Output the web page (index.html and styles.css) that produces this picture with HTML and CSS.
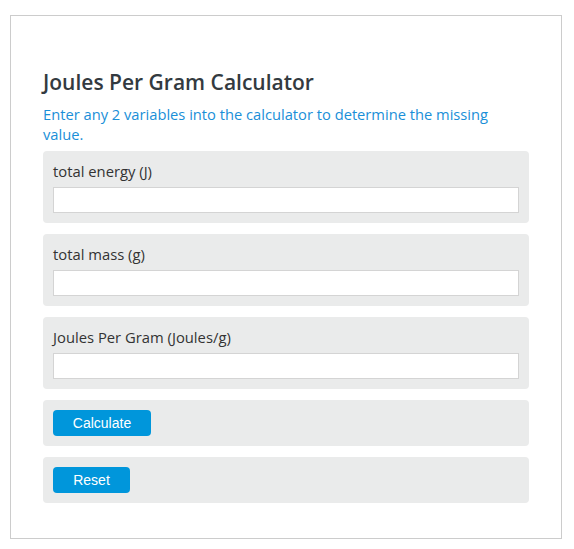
FILE: index.html
```html
<!DOCTYPE html>
<html>
<head>
<meta charset="utf-8">
<link rel="stylesheet" href="styles.css">
</head>
<body>
<div class="calc">
  <h1 class="title">Joules Per Gram Calculator</h1>
  <p class="intro">Enter any 2 variables into the calculator to determine the missing value.</p>
  <div class="fields">
    <div class="panel">
      <label class="label">total energy (J)</label>
      <input class="field" type="text">
    </div>
    <div class="panel">
      <label class="label">total mass (g)</label>
      <input class="field" type="text">
    </div>
    <div class="panel">
      <label class="label">Joules Per Gram (Joules/g)</label>
      <input class="field" type="text">
    </div>
    <div class="panel btn-panel">
      <button class="btn btn-calc">Calculate</button>
    </div>
    <div class="panel btn-panel">
      <button class="btn btn-reset">Reset</button>
    </div>
  </div>
</div>
</body>
</html>
```
FILE: styles.css
```css
html, body {
  margin: 0;
  padding: 0;
  background: #fff;
}
body {
  padding: 15px 0 0 10px;
  font-family: "Open Sans", "Noto Sans", sans-serif;
}
.calc {
  width: 486px;
  height: 522px;
  box-sizing: content-box;
  border: 1px solid #cccccc;
  padding: 0 32px;
}
.title {
  margin: 52px 0 0 0;
  font-size: 21px;
  line-height: 28px;
  font-weight: 600;
  color: #333a40;
}
.intro {
  margin: 8px 0 7px 0;
  font-size: 14.7px;
  line-height: 20px;
  color: #1a8fd8;
}
.fields {
  display: flex;
  flex-direction: column;
  gap: 11px;
}
.panel {
  background: #eaebeb;
  border-radius: 4px;
  padding: 10px;
  display: flex;
  flex-direction: column;
  align-items: flex-start;
}
.label {
  font-size: 14.8px;
  line-height: 20px;
  color: #333;
  margin-bottom: 6px;
}
.field {
  box-sizing: border-box;
  width: 100%;
  height: 26px;
  margin: 0;
  border: 1px solid #d4d4d4;
  background: #fff;
  outline: none;
}
.btn {
  height: 26px;
  border: none;
  border-radius: 4px;
  background: #0096db;
  color: #fff;
  font-family: "Liberation Sans", Arial, sans-serif;
  font-size: 14px;
  padding: 0;
}
.btn-calc { width: 98px; }
.btn-reset { width: 77px; }
```
